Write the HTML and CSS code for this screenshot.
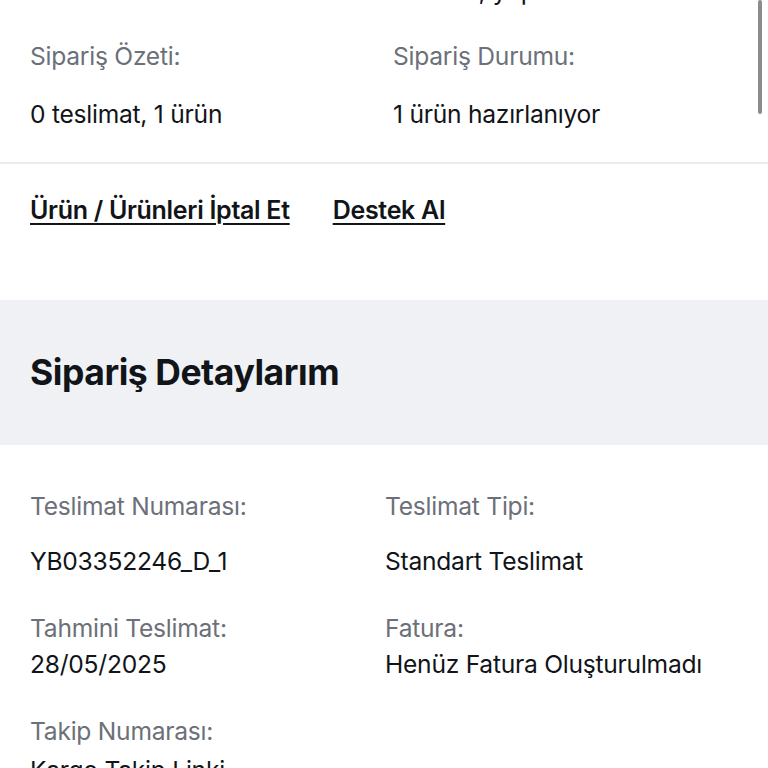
FILE: index.html
```html
<!DOCTYPE html>
<html lang="tr">
<head>
<meta charset="utf-8">
<link rel="stylesheet" href="styles.css">
</head>
<body>
<div class="page">
  <section class="summary">
    <div class="cut-row">
      <span class="cut-a">Sipariş Tarihi</span>
      <span class="cut-b">Ödeme, yapıldı</span>
    </div>
    <div class="grid top-grid">
      <div class="cell">
        <div class="label">Sipariş Özeti:</div>
        <div class="value">0 teslimat, 1 ürün</div>
      </div>
      <div class="cell">
        <div class="label">Sipariş Durumu:</div>
        <div class="value">1 ürün hazırlanıyor</div>
      </div>
    </div>
  </section>
  <nav class="actions">
    <a class="action" href="#">Ürün / Ürünleri İptal Et</a>
    <a class="action" href="#">Destek Al</a>
  </nav>
  <header class="band">
    <h2 class="band-title">Sipariş Detaylarım</h2>
  </header>
  <section class="details">
    <div class="grid det-grid">
      <div class="cell">
        <div class="label">Teslimat Numarası:</div>
        <div class="value v-wide">YB03352246_D_1</div>
      </div>
      <div class="cell">
        <div class="label">Teslimat Tipi:</div>
        <div class="value v-wide">Standart Teslimat</div>
      </div>
      <div class="cell">
        <div class="label">Tahmini Teslimat:</div>
        <div class="value v-tight">28/05/2025</div>
      </div>
      <div class="cell">
        <div class="label">Fatura:</div>
        <div class="value v-tight">Henüz Fatura Oluşturulmadı</div>
      </div>
      <div class="cell">
        <div class="label">Takip Numarası:</div>
        <div class="value v-last">Kargo Takip Linki</div>
      </div>
    </div>
  </section>
  <div class="scrollbar"></div>
</div>
</body>
</html>
```
FILE: styles.css
```css
html, body {
  margin: 0;
  padding: 0;
  background: #ffffff;
}
body {
  font-family: Inter, "Noto Sans", sans-serif;
  color: #111418;
  overflow: hidden;
  height: 768px;
}
.page {
  position: relative;
  width: 768px;
  height: 768px;
  overflow: hidden;
}
.summary {
  border-bottom: 2px solid #ebebed;
  padding: 0 30px;
  height: 162px;
  box-sizing: border-box;
  height: 164px;
  overflow: hidden;
}
.cut-row {
  display: grid;
  grid-template-columns: 363px 1fr;
  margin-top: -24px;
  height: 30px;
  font-size: 25px;
  line-height: 30px;
  color: #111418;
  overflow: hidden;
}
.cut-a { visibility: hidden; }
.grid {
  display: grid;
}
.top-grid {
  grid-template-columns: 363px 1fr;
  padding-top: 35px;
}
.label {
  font-size: 24.6px;
  line-height: 30px;
  color: #6c7079;
  font-weight: 400;
  letter-spacing: -0.25px;
}
.value {
  font-size: 24.6px;
  line-height: 30px;
  color: #111418;
  letter-spacing: -0.25px;
}
.top-grid .value { margin-top: 28px; }
.actions {
  display: flex;
  gap: 43px;
  padding: 31px 30px 0 30px;
  height: 136px;
  box-sizing: border-box;
}
.action {
  font-size: 25px;
  line-height: 30px;
  height: 30px;
  font-weight: 600;
  color: #111418;
  text-decoration: underline;
  text-underline-offset: 4px;
  text-decoration-thickness: 2px;
  letter-spacing: -0.3px;
}
.band {
  background: #eff1f5;
  height: 145px;
  display: flex;
  align-items: center;
  padding: 0 30px;
}
.band-title {
  margin: 0;
  font-size: 35.5px;
  line-height: 42px;
  font-weight: 700;
  color: #111418;
  letter-spacing: -0.45px;
}
.details {
  padding: 46px 30px 0 30px;
}
.det-grid {
  grid-template-columns: 355px 1fr;
  row-gap: 37px;
}
.v-wide { margin-top: 25px; }
.v-tight { margin-top: 6px; }
.v-last { margin-top: 9px; }
.scrollbar {
  position: absolute;
  top: 0;
  left: 758px;
  width: 4px;
  height: 114px;
  border-radius: 2px;
  background: #8c8c8c;
}
```
